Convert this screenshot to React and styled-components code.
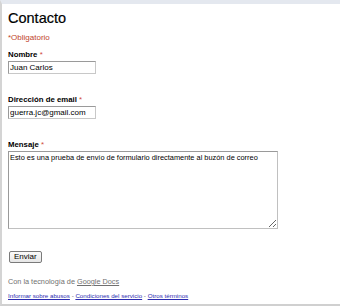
import styled, { createGlobalStyle } from 'styled-components';
import { useState } from 'react';

const GlobalStyle = createGlobalStyle`
    html, body {
        margin: 0;
        padding: 0;
        background: #fff;
    }
    body {
        font-family: "Liberation Sans", Arial, sans-serif;
    }
`

const Frame = styled.div`
    box-sizing: border-box;
    width: 340px;
    height: 306px;
    border-top: 4px solid #e4e8ef;
    border-left: 2px solid #d4d4d4;
    border-bottom: 2px solid #d0d0d0;
    padding-left: 6px;
    color: #000;
`
const Title = styled.h1`
    margin: 5px 0 0;
    font-size: 14.5px;
    line-height: 18px;
    font-weight: normal;
    -webkit-text-stroke: 0.2px #000;
`
const Required = styled.div`
    margin-top: 5.5px;
    font-size: 8px;
    line-height: 10px;
    color: #c0442c;
`
const Field = styled.div`
    margin-top: ${p => p.$top}px;
    display: flex;
    flex-direction: column;
    align-items: flex-start;
`
const Label = styled.label`
    font-size: 7.8px;
    line-height: 10px;
    font-weight: bold;
    margin-bottom: 1px;
`
const Star = styled.span`
    color: #d04a3a;
    font-weight: normal;
`
const TextInput = styled.input`
    box-sizing: border-box;
    width: 88px;
    height: 13px;
    margin: 0;
    padding: 0 1px;
    border: 1px solid;
    border-color: #9a9a9a #c8c8c8 #c8c8c8 #9a9a9a;
    font-family: inherit;
    font-size: 8px;
    color: #000;
    outline: none;
`
const TextArea = styled.textarea`
    box-sizing: border-box;
    width: 270px;
    height: 78px;
    margin: 0;
    padding: 1px 1px;
    border: 1px solid;
    border-color: #9a9a9a #c0c0c0 #c0c0c0 #9a9a9a;
    font-family: inherit;
    font-size: 7.4px;
    line-height: 10px;
    color: #000;
    outline: none;
`
const Button = styled.button`
    box-sizing: border-box;
    margin: 22px 0 0 1px;
    height: 12px;
    padding: 0 4px;
    border: 1px solid #7a7a7a;
    border-radius: 2px;
    background: linear-gradient(#fbfbfb, #e6e6e6);
    font-family: inherit;
    font-size: 8px;
    line-height: 10px;
    color: #000;
    display: block;
`
const Powered = styled.div`
    margin-top: 14px;
    font-size: 7.3px;
    line-height: 10px;
    color: #707070;
`
const PoweredLink = styled.a`
    color: #707070;
    text-decoration: underline;
`
const Footer = styled.div`
    margin-top: 5px;
    font-size: 6.2px;
    line-height: 8px;
    color: #555;
`
const FooterLink = styled.a`
    color: #2b2bb0;
    text-decoration: underline;
`

const App = () => {

    const [info, setInfo] = useState({
        nombre: 'Juan Carlos',
        email: 'guerra.jc@gmail.com',
        mensaje: 'Esto es una prueba de envío de formulario directamente al buzón de correo'
    });

    const handleChange = e => {
        setInfo(prev => ({...prev, [e.target.id]: e.target.value}))
    }

    return(
        <>
            <GlobalStyle/>
            <Frame>
                <Title>Contacto</Title>
                <Required>*Obligatorio</Required>

                <Field $top={7.5}>
                    <Label htmlFor='nombre'>Nombre <Star>*</Star></Label>
                    <TextInput id='nombre' value={info.nombre} onChange={handleChange}/>
                </Field>

                <Field $top={20.5}>
                    <Label htmlFor='email'>Dirección de email <Star>*</Star></Label>
                    <TextInput id='email' value={info.email} onChange={handleChange}/>
                </Field>

                <Field $top={21.5}>
                    <Label htmlFor='mensaje'>Mensaje <Star>*</Star></Label>
                    <TextArea id='mensaje' value={info.mensaje} onChange={handleChange}/>
                </Field>

                <Button type='button'>Enviar</Button>

                <Powered>Con la tecnología de <PoweredLink href='#'>Google Docs</PoweredLink></Powered>

                <Footer>
                    <FooterLink href='#'>Informar sobre abusos</FooterLink> - <FooterLink href='#'>Condiciones del servicio</FooterLink> - <FooterLink href='#'>Otros términos</FooterLink>
                </Footer>
            </Frame>
        </>
    )
}

export default App;
